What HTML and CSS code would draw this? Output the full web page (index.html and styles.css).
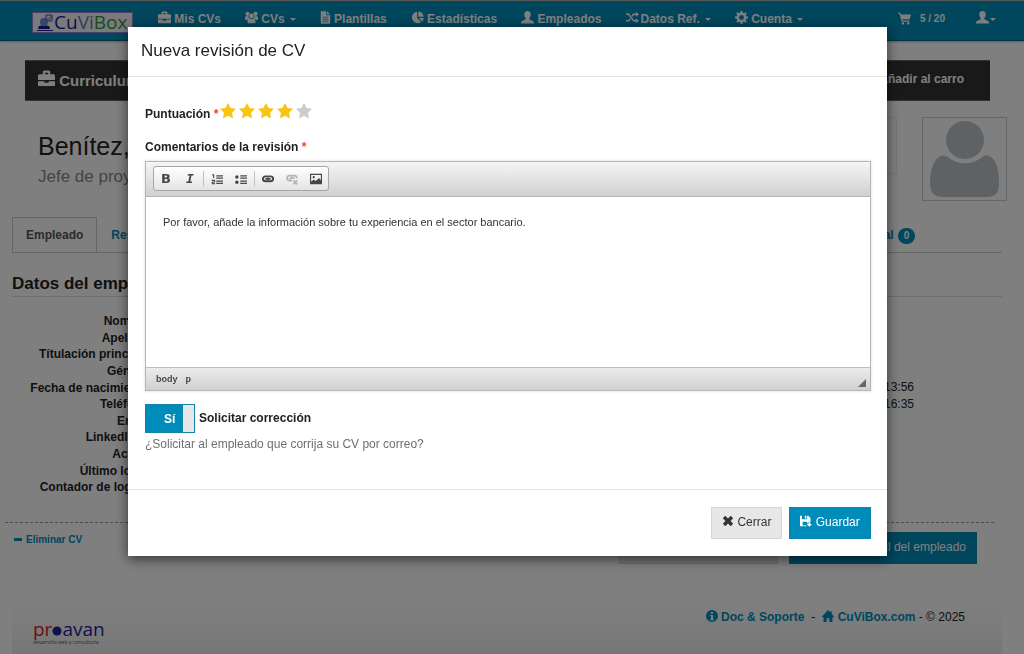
FILE: index.html
```html
<!DOCTYPE html>
<html lang="es">
  <head>
    <meta charset="UTF-8" />
    <meta name="viewport" content="width=device-width, initial-scale=1" />
    <title>CuViBox - Nueva revisión de CV</title>
    <link rel="stylesheet" href="styles.css">
  </head>
  <body>
    <svg class="sprite" aria-hidden="true">
      <symbol id="i-case" viewBox="0 0 16 16">
        <path d="M4.500 4V2.200C4.500 1.200 5.200.5 6.200.5h3.600c1 0 1.700.7 1.700 1.700V4h3c.8 0 1.500.6 1.500 1.400V9.500H0V5.400C0 4.600.7 4 1.500 4zm2 0h3V2.500h-3zM0 10.500h6V12h4v-1.500h6V14c0 .6-.4 1-1 1H1c-.6 0-1-.4-1-1z" />
      </symbol>
      <symbol id="i-group" viewBox="0 0 16 16">
        <circle cx="3" cy="3.500" r="2.500" />
        <circle cx="13" cy="3.500" r="2.500" />
        <circle cx="8" cy="6" r="3" />
        <path d="M0 9.500C0 7.500.8 6 2 6l2.300.6C4.300 8 5 8.800 5.500 9.500H3.500L2.500 11H1.300C.5 11 0 10.400 0 9.500zM16 9.500C16 7.500 15.200 6 14 6l-2.300.6c0 1.400-.7 2.200-1.200 2.900h2L13.500 11h1.200c.8 0 1.300-.6 1.300-1.500zM3 13.500C3 11 4 9 5.500 9c1.500 1.200 3.500 1.200 5 0C12 9 13 11 13 13.500c0 1-.7 1.700-1.700 1.700H4.700C3.700 15.200 3 14.500 3 13.500z" />
      </symbol>
      <symbol id="i-file" viewBox="0 0 14 16">
        <path fill-rule="evenodd" d="M1 0h7v5h5v11H1zM9 0l4 4H9zM3.500 7v1h7V7zm0 2.500v1h7v-1zm0 2.500v1h7v-1z" />
      </symbol>
      <symbol id="i-pie" viewBox="0 0 16 16">
        <path d="M7.500 1v7.500l5 5A7 7 0 1 1 7.500 1zM9 .5A6.500 6.500 0 0 1 15.500 7H9zM9.500 8.500h6c0 1.700-.6 3.200-1.700 4.300z" />
      </symbol>
      <symbol id="i-user" viewBox="0 0 16 16">
        <path d="M8 0c2.600 0 4 1.700 4 4.200 0 2-.8 3.500-1.800 4.400v1.600l4.400 2c.9.400 1.400 1.200 1.400 2.300V15.500H0v-1c0-1.100.5-1.900 1.400-2.300l4.400-2V8.600C4.800 7.700 4 6.200 4 4.200 4 1.700 5.400 0 8 0z" />
      </symbol>
      <symbol id="i-random" viewBox="0 0 16 16">
        <path d="M0 3h3.800l6 8H12V9l4 3-4 3v-2H8.800l-6-8H0zm0 8h2.800l1.700-2.200 1.300 1.700L3.800 13H0zm12-8V1l4 3-4 3V5H9.800L8 7.300 6.800 5.600 8.800 3z" />
      </symbol>
      <symbol id="i-gear" viewBox="0 0 16 16">
        <path fill-rule="evenodd" d="M6.800 0h2.400l.4 2.200 1.500.6L13 1.500 14.500 3l-1.300 1.900.6 1.500 2.200.4v2.400l-2.200.4-.6 1.500 1.300 1.900-1.500 1.500-1.900-1.300-1.500.6-.4 2.200H6.800l-.4-2.200-1.500-.6L3 14.500 1.500 13l1.300-1.900-.6-1.500L0 9.200V6.800l2.200-.4.600-1.500L1.500 3 3 1.500l1.900 1.300 1.500-.6zM8 5a3 3 0 1 0 0 6 3 3 0 0 0 0-6z" />
      </symbol>
      <symbol id="i-cart" viewBox="0 0 16 16">
        <path d="M0 1h3l.6 2H16l-1.600 6H5.300l.4 1.500H14V12H4.500L2 2.500H0z" />
        <circle cx="6" cy="14" r="1.500" />
        <circle cx="12.500" cy="14" r="1.500" />
      </symbol>
      <symbol id="i-star" viewBox="0 0 16 16">
        <path d="M8 0l2.600 5 5.400.8-3.900 3.900.9 5.800-5-2.700-5 2.700.9-5.800L0 5.800 5.400 5z" />
      </symbol>
      <symbol id="i-close" viewBox="0 0 14 14">
        <path d="M3.800 1L7 4l3.200-3L13 3.800 10 7l3 3.200-2.800 2.800L7 10l-3.200 3L1 10.200 4 7 1 3.800z" />
      </symbol>
      <symbol id="i-save" viewBox="0 0 16 16">
        <path fill-rule="evenodd" d="M0 1h2.500v4.500h7V1H11l3 3v5h-3v2H9.500V9h-6v5H9v1H0zM6.500 1h2v3.500h-2z" />
        <path d="M11.500 9h2v3H16l-3.500 3.800L9 12h2.500z" />
      </symbol>
      <symbol id="i-info" viewBox="0 0 16 16">
        <path fill-rule="evenodd" d="M8 0a8 8 0 1 1 0 16A8 8 0 0 1 8 0zM6.500 2.500v2.500h3V2.500zM5.500 6.500V8h1v4h-1v1.500h5V12h-1V6.500z" />
      </symbol>
      <symbol id="i-home" viewBox="0 0 16 16">
        <path d="M8 0L11 3V1.500h2V5l3 3.500-1 1H14V16H9.800v-5H6.200v5H2V9.500H1l-1-1z" />
      </symbol>
      <symbol id="i-olist" viewBox="0 0 16 16">
        <path d="M7 3h9v1.700H7zM7 6h9v1.700H7zM7 10h9v1.700H7zM7 13h9v1.700H7zM1.500 1.500h2.800v5H2.800V3H1.500zM1 9h4.500v3.500H3v1h2.500V15H1v-3.500h3v-1H1z" />
      </symbol>
      <symbol id="i-ulist" viewBox="0 0 16 16">
        <path d="M7 3h9v1.700H7zM7 6h9v1.700H7zM7 10h9v1.700H7zM7 13h9v1.700H7z" />
        <circle cx="2.500" cy="5.200" r="2.300" />
        <circle cx="2.500" cy="12.200" r="2.300" />
      </symbol>
      <symbol id="i-link" viewBox="0 0 16 16">
        <path fill="none" stroke="currentColor" stroke-width="2.600" d="M8 5.500L7 4.500H4.500a3.200 3.200 0 0 0 0 6.500H7l1-1M8 5.500L9 4.500h2.500a3.200 3.200 0 0 1 0 6.500H9l-1-1M4.500 7.800h7" />
      </symbol>
      <symbol id="i-unlink" viewBox="0 0 16 16">
        <path fill="none" stroke="currentColor" stroke-width="2.400" d="M8 4.500L7 3.500H4.500a3.200 3.200 0 0 0 0 6.500H8M8 4.500L9 3.500h2.500a3.200 3.200 0 0 1 3 3.500M4.500 6.800h7M10 10l5 5M15 10l-5 5" />
      </symbol>
      <symbol id="i-image" viewBox="0 0 16 16">
        <path fill-rule="evenodd" d="M0 1h16v14H0zM1.500 2.500v9L5 8.500l2.500 2L12 6.500l2.500 3v-7z" />
        <circle cx="5" cy="5.500" r="1.500" />
      </symbol>
    </svg>

    <nav class="topbar">
      <a class="brand" href="#" aria-label="CuViBox">
        <svg class="brand-icon" viewBox="0 0 16 18" aria-hidden="true">
          <circle cx="7" cy="8" r="4" fill="#6f8fd8" />
          <path d="M1 15c0-4 3-4 6-3 3-1 6-1 6 3zM0 16h16v1H0z" fill="#1d1a8c" />
          <path d="M9 1h6v6h-4L9 5z" fill="#dfe6f7" stroke="#4b45b8" />
          <path d="M10.500 4l1.500 1.500L14.500 2" fill="none" stroke="#2e8b3d" />
        </svg>
        <span class="brand-cu">Cu</span><span class="brand-vi">Vi</span><span class="brand-box">Box</span>
      </a>
      <ul class="menu">
        <li><a href="#"><svg class="icon"><use href="#i-case" /></svg> Mis CVs</a></li>
        <li><a class="caret" href="#"><svg class="icon"><use href="#i-group" /></svg> CVs</a></li>
        <li><a href="#"><svg class="icon icon-narrow"><use href="#i-file" /></svg> Plantillas</a></li>
        <li><a href="#"><svg class="icon"><use href="#i-pie" /></svg> Estadísticas</a></li>
        <li><a href="#"><svg class="icon"><use href="#i-user" /></svg> Empleados</a></li>
        <li><a class="caret" href="#"><svg class="icon icon-wide"><use href="#i-random" /></svg>Datos Ref.</a></li>
        <li><a class="caret" href="#"><svg class="icon"><use href="#i-gear" /></svg> Cuenta</a></li>
      </ul>
      <div class="menu-right">
        <a class="cart" href="#"><svg class="icon"><use href="#i-cart" /></svg> 5 / 20</a>
        <a class="caret user" href="#" aria-label="Usuario"><svg class="icon"><use href="#i-user" /></svg></a>
      </div>
    </nav>

    <main class="page">
      <div class="titlebar">
        <h1><svg class="icon icon-large"><use href="#i-case" /></svg> Curriculum</h1>
        <a href="#">Añadir al carro</a>
      </div>

      <header class="profile">
        <div class="profile-name">
          <h2>Benítez, Ana</h2>
          <p>Jefe de proyecto</p>
        </div>
        <div class="company-logo"></div>
        <svg class="avatar" viewBox="0 0 83 82" role="img" aria-label="Foto">
          <path d="M18 38c3-1 6 0 8 2 9 7 23 7 32 0 2-2 5-3 8-2 8 3 10 16 10 28 0 9-4 13-12 13H20C12 79 7 75 7 66c0-12 3-25 11-28z" />
          <circle cx="42" cy="22" r="19" />
        </svg>
      </header>

      <ul class="tabs">
        <li><a class="active" href="#">Empleado</a></li>
        <li><a href="#">Resumen</a></li>
        <li class="tab-last"><a href="#">Historial <span class="badge">0</span></a></li>
      </ul>

      <section class="details">
        <h3>Datos del empleado</h3>
        <div class="columns">
          <dl>
            <dt>Nombre:</dt><dd></dd>
            <dt>Apellido:</dt><dd></dd>
            <dt>Títulación principal:</dt><dd></dd>
            <dt>Género:</dt><dd></dd>
            <dt>Fecha de nacimiento:</dt><dd></dd>
            <dt>Teléfono:</dt><dd></dd>
            <dt>Email:</dt><dd></dd>
            <dt>LinkedIn id:</dt><dd></dd>
            <dt>Activo:</dt><dd></dd>
            <dt>Último login:</dt><dd></dd>
            <dt>Contador de logins:</dt><dd></dd>
          </dl>
          <div class="dates">
            <time>13:56</time>
            <time>16:35</time>
          </div>
        </div>
      </section>

      <div class="actions">
        <a class="delete" href="#">Eliminar CV</a>
        <div class="actions-right">
          <button class="btn btn-grey" type="button" aria-label="Editar"></button>
          <button class="btn btn-blue" type="button">Perfil del empleado</button>
        </div>
      </div>
    </main>

    <footer class="footer">
      <a class="proavan" href="#" aria-label="proavan">
        <span class="proavan-name"><span class="red">pr</span><svg viewBox="0 0 12 12" aria-hidden="true"><circle cx="6" cy="6" r="5.500" /></svg>avan</span>
        <small>desarrollo web y consultoría</small>
      </a>
      <p>
        <a href="#"><svg class="icon"><use href="#i-info" /></svg> Doc &amp; Soporte</a><span class="sep">-</span><a href="#"><svg class="icon"><use href="#i-home" /></svg> CuViBox.com</a> - © 2025
      </p>
    </footer>

    <div class="overlay">
      <form class="modal" role="dialog" aria-labelledby="modal-title">
        <h4 id="modal-title">Nueva revisión de CV</h4>
        <div class="modal-body">
          <fieldset class="rating">
            <legend>Puntuación <span class="required">*</span></legend>
            <label class="star on"><input type="radio" name="stars" value="1" aria-label="1" /><svg><use href="#i-star" /></svg></label>
            <label class="star on"><input type="radio" name="stars" value="2" aria-label="2" /><svg><use href="#i-star" /></svg></label>
            <label class="star on"><input type="radio" name="stars" value="3" aria-label="3" /><svg><use href="#i-star" /></svg></label>
            <label class="star on"><input type="radio" name="stars" value="4" aria-label="4" checked /><svg><use href="#i-star" /></svg></label>
            <label class="star"><input type="radio" name="stars" value="5" aria-label="5" /><svg><use href="#i-star" /></svg></label>
          </fieldset>

          <label class="field-label" for="comments">Comentarios de la revisión <span class="required">*</span></label>
          <div class="editor">
            <div class="editor-top">
              <div class="toolgroup">
                <button class="bold" type="button" title="Negrita">B</button>
                <button class="italic" type="button" title="Cursiva">I</button>
                <span class="divider"></span>
                <button type="button" title="Lista numerada"><svg><use href="#i-olist" /></svg></button>
                <button type="button" title="Lista con viñetas"><svg><use href="#i-ulist" /></svg></button>
                <span class="divider"></span>
                <button type="button" title="Vínculo"><svg><use href="#i-link" /></svg></button>
                <button type="button" title="Quitar vínculo" disabled><svg><use href="#i-unlink" /></svg></button>
                <button type="button" title="Imagen"><svg><use href="#i-image" /></svg></button>
              </div>
            </div>
            <textarea id="comments">Por favor, añade la información sobre tu experiencia en el sector bancario.</textarea>
            <div class="editor-bottom">
              <span>body</span>
              <span>p</span>
              <i class="resizer"></i>
            </div>
          </div>

          <label class="switch">
            <input type="checkbox" checked />
            <span class="switch-box">Sí</span>
            Solicitar corrección
          </label>
          <p class="hint">¿Solicitar al empleado que corrija su CV por correo?</p>
        </div>
        <div class="modal-footer">
          <button class="btn btn-grey" type="button"><svg class="icon"><use href="#i-close" /></svg> Cerrar</button>
          <button class="btn btn-blue" type="submit"><svg class="icon"><use href="#i-save" /></svg> Guardar</button>
        </div>
      </form>
    </div>
  </body>
</html>
```
FILE: styles.css
```css
* {
  box-sizing: border-box;
}
html {
  height: 100%;
}
body {
  display: flex;
  flex-direction: column;
  min-height: 100%;
  margin: 0;
  overflow: hidden;
  background: #fff;
  color: #222;
  font-family: "Liberation Sans", Arial, sans-serif;
  font-size: 12px;
  line-height: 16px;
}
h1,
h2,
h3,
h4,
p,
ul,
dl,
dd {
  margin: 0;
  padding: 0;
}
ul {
  list-style: none;
}
a {
  color: #008cba;
  text-decoration: none;
  font-weight: bold;
}
svg {
  fill: currentColor;
}
.sprite {
  display: none;
}
.icon {
  width: 13px;
  height: 13px;
  vertical-align: -1px;
}
.icon-narrow {
  width: 11px;
}
.icon-wide {
  width: 15px;
}
.icon-large {
  width: 17px;
  height: 17px;
}

/* top bar */
.topbar {
  display: flex;
  align-items: center;
  height: 41px;
  padding: 0 28px 4px 32px;
  background: #008cba;
  border-top: 1px solid #aaa;
  border-bottom: 1px solid #006687;
  box-shadow: 0 1px 2px #bbb;
}
.topbar a {
  color: #fff;
  white-space: nowrap;
}
.topbar .brand {
  display: flex;
  align-items: center;
  width: 101px;
  height: 21px;
  margin-top: 8px;
  padding-left: 4px;
  background: #f4f4fa;
  border: 1px solid #8c86d8;
  font-family: "Open Sans", sans-serif;
  font-size: 19px;
  font-weight: normal;
  line-height: 19px;
}
.brand-icon {
  width: 16px;
  height: 18px;
  margin-right: 1px;
}
.brand-cu {
  color: #1b1895;
}
.brand-vi {
  color: #5a82b4;
}
.brand-box {
  color: #35943c;
}
.menu {
  display: flex;
  gap: 24px;
  margin-left: 25px;
}
.caret::after {
  content: "";
  display: inline-block;
  margin-left: 5px;
  border: 3px solid transparent;
  border-top-color: currentColor;
  border-bottom: 0;
  vertical-align: 2px;
}
.menu-right {
  display: flex;
  gap: 31px;
  margin-left: auto;
}
.cart {
  display: flex;
  align-items: center;
  gap: 9px;
  font-size: 10px;
}
.user::after {
  margin-left: 1px;
}

/* curriculum */
.page {
  padding: 19px 22px 0 12px;
}
.titlebar {
  display: flex;
  justify-content: space-between;
  align-items: center;
  height: 41px;
  margin: 0 12px 16px 13px;
  padding: 0 26px 3px 13px;
  background: #333;
  border: 1px solid #666;
  border-width: 1px 0;
}
.titlebar h1 {
  color: #fff;
  font-size: 15px;
}
.titlebar a {
  color: #fff;
}
.profile {
  display: flex;
  align-items: flex-start;
  height: 84px;
  margin-right: -5px;
  padding-left: 26px;
}
.profile-name {
  flex: 1;
  padding-top: 14px;
}
.profile h2 {
  font-size: 25px;
  font-weight: normal;
  line-height: 30px;
}
.profile p {
  padding-top: 6px;
  color: #888;
  font-size: 17px;
  line-height: 20px;
}
.company-logo {
  width: 58px;
  height: 57px;
  margin-right: 25px;
  border: 1px solid #eee;
}
.avatar {
  width: 85px;
  height: 84px;
  border: 1px solid #ccc;
  color: #bcc5ca;
}
.tabs {
  display: flex;
  margin-top: 16px;
  border-bottom: 1px solid #ccc;
}
.tabs a {
  display: block;
  height: 35px;
  padding: 10px 14px;
}
.tabs .active {
  margin-bottom: -1px;
  padding: 9px 13px;
  background: #fff;
  border: 1px solid #ccc;
  border-bottom: 0;
  color: #555;
}
.tab-last {
  margin-left: auto;
  padding-right: 73px;
}
.badge {
  display: inline-block;
  width: 17px;
  margin-left: 1px;
  background: #008cba;
  border-radius: 8px;
  color: #fff;
  font-size: 10px;
  text-align: center;
}
.details h3 {
  padding: 21px 0 2px;
  border-bottom: 1px solid #ddd;
  font-size: 17px;
  line-height: 20px;
}
.columns {
  display: flex;
  min-height: 225px;
  padding: 16px 0 26px;
}
.columns dl {
  flex: 1;
  display: grid;
  grid-template-columns: 141px 1fr;
  grid-auto-rows: 1fr;
  gap: 0 12px;
}
.columns dt {
  font-weight: bold;
  text-align: right;
}
.dates {
  display: flex;
  flex-direction: column;
  gap: 1px;
  padding: 66px 88px 0 0;
}
.actions {
  display: flex;
  justify-content: space-between;
  margin: 0 8px 0 -7px;
  padding: 9px 17px 0 9px;
  border-top: 1px dashed #999;
}
.delete {
  font-size: 10px;
}
.delete::before {
  content: "";
  display: inline-block;
  width: 8px;
  height: 3px;
  margin-right: 4px;
  background: #008cba;
  vertical-align: 2px;
}
.actions-right {
  display: flex;
  gap: 11px;
}
.btn {
  height: 32px;
  padding: 0 10px 3px;
  border: 1px solid;
  font-family: inherit;
  font-size: 12px;
  white-space: nowrap;
  cursor: pointer;
}
.btn-grey {
  background: #e7e7e7;
  border-color: #d6d6d6;
  color: #333;
}
.btn-blue {
  background: #008cba;
  border-color: #0f86ae;
  color: #fff;
}
.actions .btn-grey {
  min-width: 159px;
}
.actions .btn-blue {
  min-width: 188px;
  text-align: right;
}

/* footer */
.footer {
  flex: 1;
  display: flex;
  justify-content: space-between;
  margin: 37px 22px 0 12px;
  padding: 8px 37px 0 21px;
  background: linear-gradient(#fff, #eee);
}
.footer .icon {
  width: 12px;
  height: 12px;
}
.sep {
  margin: 0 7px;
}
.proavan {
  display: flex;
  flex-direction: column;
  padding-top: 11px;
  color: #23239c;
  font-family: "Open Sans", sans-serif;
  font-weight: normal;
}
.proavan-name {
  font-size: 19px;
  line-height: 18px;
}
.proavan svg {
  width: 10px;
  height: 10px;
}
.proavan .red {
  color: #d0202a;
}
.proavan small {
  color: #555;
  font-size: 5px;
  line-height: 8px;
}

/* review dialog */
.overlay {
  position: fixed;
  inset: 0;
  padding: 27px 13.4% 0 12.5%;
  background: rgba(0, 0, 0, 0.5);
}
.modal {
  background: #fff;
  box-shadow: 0 3px 12px rgba(0, 0, 0, 0.6);
}
.modal h4 {
  padding: 12px 13px 13px;
  border-bottom: 1px solid #e5e5e5;
  font-size: 17px;
  font-weight: normal;
  line-height: 24px;
}
.modal-body {
  padding: 26px 16px 37px 17px;
}
.rating {
  display: flex;
  margin: 0;
  padding: 0;
  border: 0;
}
.rating legend {
  float: left;
  margin-right: 2px;
  padding: 3px 0 0;
  font-weight: bold;
}
.required {
  color: #f04124;
}
.star {
  width: 19px;
  color: #ccc;
}
.star.on {
  color: #f9c515;
}
.star input,
.switch input {
  position: absolute;
  opacity: 0;
}
.star svg {
  width: 16px;
  height: 16px;
}
.field-label {
  display: block;
  margin: 16px 0 6px;
  font-weight: bold;
}
.editor {
  border: 1px solid #b6b6b6;
  box-shadow: 0 0 3px rgba(0, 0, 0, 0.15);
}
.editor-top {
  padding: 4px 7px 5px;
  background: linear-gradient(#f5f5f5, #cfd1cf);
  border-bottom: 1px solid #b6b6b6;
}
.toolgroup {
  display: inline-flex;
  align-items: center;
  height: 25px;
  border: 1px solid #a6a6a6;
  border-radius: 3px;
  background: linear-gradient(#fff, #e4e4e4);
  vertical-align: top;
}
.toolgroup button {
  display: flex;
  align-items: center;
  justify-content: center;
  width: 24px;
  height: 23px;
  padding: 0;
  background: none;
  border: 0;
  color: #474747;
}
.toolgroup button:disabled {
  color: #b5b5b5;
}
.toolgroup svg {
  width: 12px;
  height: 12px;
}
.toolgroup .bold {
  font: bold 13px "DejaVu Sans", sans-serif;
}
.toolgroup .italic {
  font: italic bold 13px "DejaVu Sans Mono", monospace;
}
.divider {
  width: 1px;
  height: 15px;
  margin: 0 1px;
  background: #c0c0c0;
}
.editor textarea {
  display: block;
  width: 100%;
  height: 170px;
  padding: 17px;
  border: 0;
  color: #333;
  font-family: inherit;
  font-size: 11px;
  line-height: 16px;
  resize: none;
}
.editor-bottom {
  display: flex;
  gap: 8px;
  height: 23px;
  padding: 3px 4px 3px 10px;
  background: linear-gradient(#ebebeb, #cfd1cf);
  border-top: 1px solid #bfbfbf;
  color: #484848;
  font-size: 9px;
  font-weight: bold;
}
.resizer {
  align-self: flex-end;
  margin-left: auto;
  border: 4px solid #666;
  border-top-color: transparent;
  border-left-color: transparent;
}
.switch {
  display: flex;
  gap: 4px;
  margin-top: 13px;
  font-weight: bold;
  line-height: 28px;
}
.switch-box {
  width: 50px;
  height: 29px;
  padding-left: 18px;
  background: linear-gradient(to left, #e7e7e7 11px, #1484a8 11px, #008cba 13px);
  border: 1px solid #1484a8;
  color: #fff;
}
.hint {
  padding-top: 3px;
  color: #6f6f6f;
}
.modal-footer {
  display: flex;
  justify-content: flex-end;
  gap: 7px;
  padding: 17px 16px;
  border-top: 1px solid #e5e5e5;
}
.modal-footer .icon {
  width: 12px;
  height: 12px;
}
```
